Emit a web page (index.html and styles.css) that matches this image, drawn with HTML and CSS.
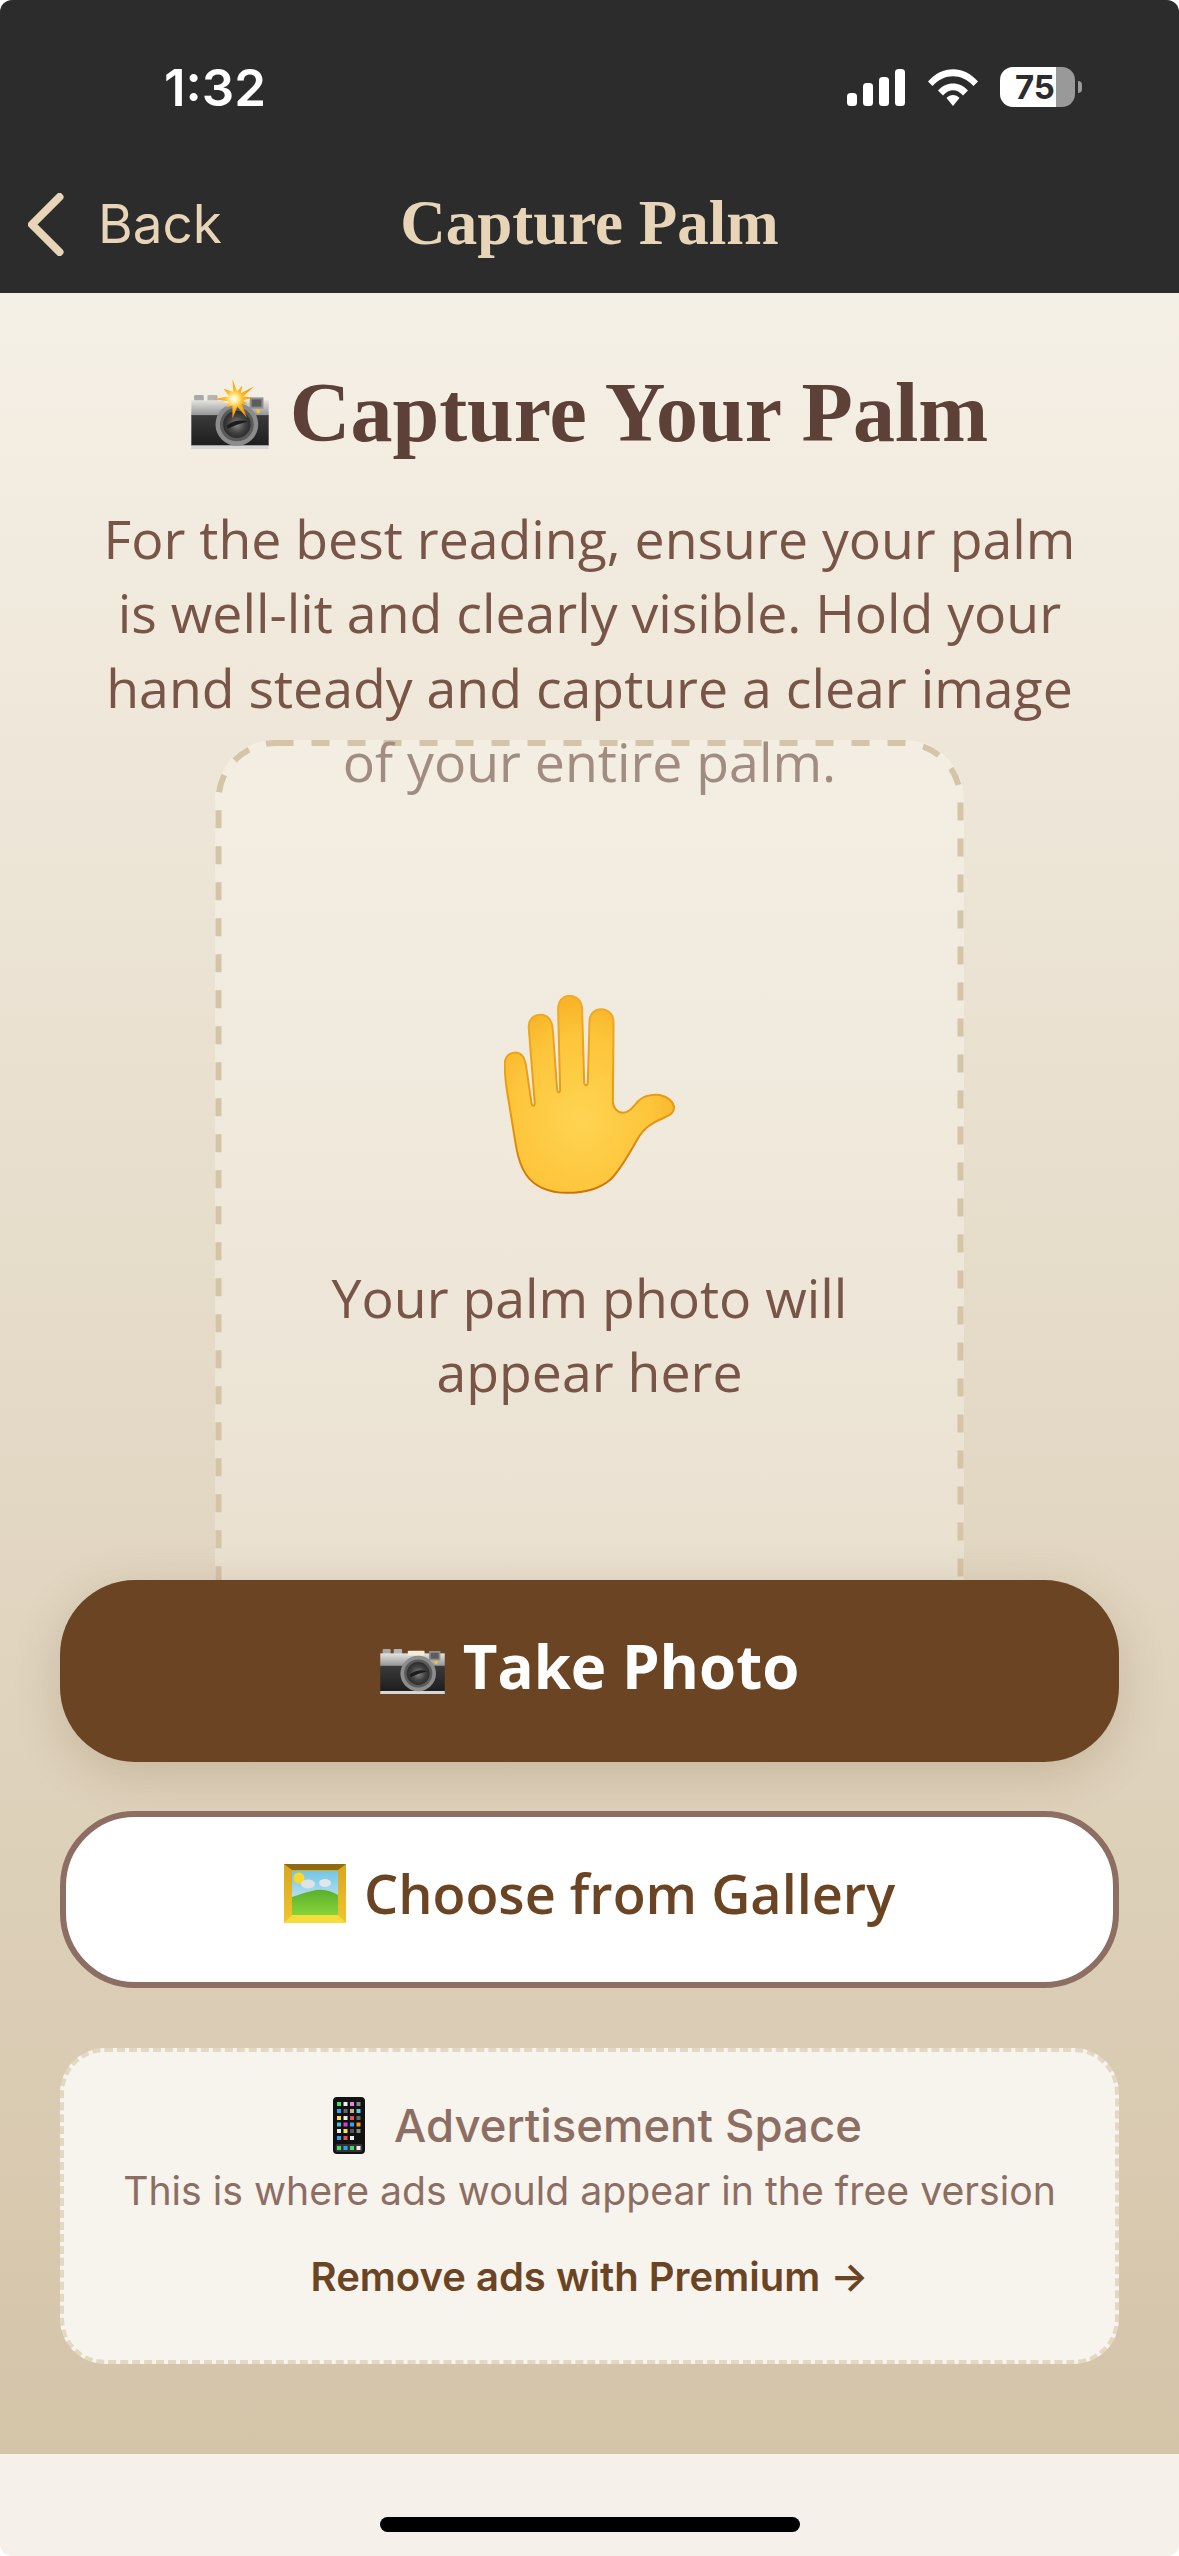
FILE: index.html
```html
<!DOCTYPE html>
<html lang="en">
<head>
<meta charset="utf-8">
<title>Capture Palm</title>
<link rel="stylesheet" href="styles.css">
</head>
<body>
<svg class="sprite" width="0" height="0" aria-hidden="true">
  <defs>
    <linearGradient id="gTop" x1="0" y1="0" x2="0" y2="1"><stop offset="0" stop-color="#e4e4e2"/><stop offset="1" stop-color="#8f8f8f"/></linearGradient>
    <linearGradient id="gBody" x1="0" y1="0" x2="0" y2="1"><stop offset="0" stop-color="#3a3a3a"/><stop offset="1" stop-color="#1d1d1d"/></linearGradient>
    <radialGradient id="gLens" cx="0.5" cy="0.5" r="0.5"><stop offset="0" stop-color="#8a8a8a"/><stop offset="0.6" stop-color="#444"/><stop offset="1" stop-color="#2c2c2c"/></radialGradient>
    <radialGradient id="gStar" cx="0.5" cy="0.5" r="0.55"><stop offset="0" stop-color="#ffffff"/><stop offset="0.16" stop-color="#fff2a8"/><stop offset="0.42" stop-color="#ffb71c"/><stop offset="1" stop-color="#f98a00"/></radialGradient>
    <radialGradient id="gHand" cx="0.45" cy="0.62" r="0.6"><stop offset="0" stop-color="#ffd452"/><stop offset="0.7" stop-color="#fdc53a"/><stop offset="1" stop-color="#f8b428"/></radialGradient>
    <linearGradient id="gRim" x1="0" y1="0" x2="0" y2="1"><stop offset="0" stop-color="#eeac28"/><stop offset="0.6" stop-color="#e8980f"/><stop offset="1" stop-color="#cf7205"/></linearGradient>
    <linearGradient id="gSky" x1="0" y1="0" x2="0" y2="1"><stop offset="0" stop-color="#6fc7e8"/><stop offset="1" stop-color="#e6eef2"/></linearGradient>
    <linearGradient id="gGrass" x1="0" y1="0" x2="0" y2="1"><stop offset="0" stop-color="#5bb02c"/><stop offset="1" stop-color="#86d43a"/></linearGradient>
    <linearGradient id="gFrame" x1="0" y1="0" x2="0" y2="1"><stop offset="0" stop-color="#d9a520"/><stop offset="1" stop-color="#f0c52c"/></linearGradient>
    <symbol id="camera" viewBox="0 0 192 134">
      <rect x="7" y="0" width="24" height="22" rx="3" fill="#a9a9a9"/>
      <rect x="40" y="0" width="25" height="22" rx="3" fill="#b5b5b5"/>
      <rect x="0" y="13" width="192" height="40" fill="url(#gTop)"/>
      <rect x="82" y="5" width="50" height="14" rx="3" fill="#f4ecd6"/>
      <rect x="145" y="6" width="34" height="28" fill="#8f8f8f"/>
      <rect x="150" y="11" width="24" height="18" fill="#5d5d5d"/>
      <rect x="0" y="50" width="192" height="76" fill="url(#gBody)"/>
      <rect x="0" y="125" width="192" height="9" fill="#d6d6d6"/>
      <circle cx="166" cy="40" r="5" fill="#fbc02d"/>
      <circle cx="113" cy="73" r="53" fill="#8c8c8c"/>
      <circle cx="113" cy="73" r="42" fill="#5a5a5a"/>
      <circle cx="113" cy="73" r="34" fill="url(#gLens)"/>
      <path d="M88 76 Q112 58 140 66 Q116 72 90 84 Z" fill="#1c1c1c"/>
    </symbol>
  </defs>
</svg>

<div class="app">
  <header class="top">
    <div class="status">
      <span class="time">1:32</span>
      <div class="status-icons">
        <svg class="signal" viewBox="0 0 58 37"><rect x="0" y="24" width="10" height="13" rx="3.5"/><rect x="16" y="14" width="10" height="23" rx="3.5"/><rect x="32" y="8" width="10" height="29" rx="3.5"/><rect x="48" y="0" width="10" height="37" rx="3.5"/></svg>
        <svg class="wifi" viewBox="0 0 50 37"><path d="M0 12.5 C14 -4 36 -4 50 12.5 L45.5 17 C33.5 4 16.500 4 4.500 17 Z"/><path d="M10 21.500 C18 12 32 12 40 21.500 L35 26.500 C29 19.500 21 19.500 15 26.500 Z"/><path d="M18.500 29 C22 25 28 25 31.500 29 L25 37 Z"/></svg>
        <div class="battery"><div class="cell"><span class="level">75</span></div><span class="nub"></span></div>
      </div>
    </div>
    <nav class="navbar">
      <a class="back">
        <svg class="chevron" viewBox="0 0 36 63"><path d="M31.500 4 L4 31.500 L31.500 59"/></svg>
        <span>Back</span>
      </a>
      <span class="nav-title">Capture Palm</span>
    </nav>
  </header>

  <main class="content">
    <h1 class="headline">
      <svg class="emoji-flash" viewBox="0 0 78 70">
        <use href="#camera" x="0" y="16" width="78" height="54"/>
        <polygon fill="url(#gStar)" points="41.500,0.300 46,12.600 51.300,6.400 49.800,14.300 63,7.400 52,17.400 62,18.500 52.400,21.300 56.800,25.500 50.600,25 56,39 46.300,27.400 41.500,39.700 41.300,26.500 35,28.400 38,22.600 23,20 38,17.400 32.700,9.700 42.400,13"/>
      </svg>
      <span>Capture Your Palm</span>
    </h1>
    <p class="intro">For the best reading, ensure your palm is well-lit and clearly visible. Hold your hand steady and capture a clear image <span class="intro-faded">of your entire palm.</span></p>

    <section class="preview">
      <svg class="preview-border" viewBox="0 0 748 920"><rect x="3" y="3" width="742" height="914" rx="57"/></svg>
      <svg class="hand" viewBox="196 103 512 595">
        <path fill="url(#gHand)" stroke="url(#gRim)" stroke-width="6" d="M198 310 C198 285 215 275 230 275 C248 275 258 290 262 315 L278 425 C280 437 288 437 288 425 L270 200 C270 175 285 162 305 162 C328 162 340 180 342 205 L355 385 C357 398 364 398 364 385 L358 145 C358 120 372 105 393 105 C415 105 430 122 430 148 L436 365 C437 375 446 375 447 365 L452 180 C453 158 468 145 487 145 C508 145 524 160 524 185 L522 420 C522 440 535 455 552 455 C570 455 580 440 598 420 C615 405 640 400 662 402 C690 408 705 425 705 440 C705 455 695 462 675 470 C640 485 615 500 595 535 C570 580 545 625 515 655 C480 685 430 695 385 695 C330 695 285 675 262 640 C245 615 238 590 232 555 L205 390 C200 355 198 330 198 310 Z"/>
      </svg>
      <p class="preview-text">Your palm photo will appear here</p>
    </section>

    <div class="actions">
      <button class="btn btn-primary">
        <svg class="emoji-camera"><use href="#camera"/></svg>
        <span>Take Photo</span>
      </button>
      <button class="btn btn-secondary">
        <svg class="emoji-picture" viewBox="0 0 62 59">
          <rect width="62" height="59" fill="url(#gFrame)"/>
          <path d="M0 0 H62 L54 6 H8 Z" fill="#8f6a12"/>
          <path d="M0 59 H62 L54 51 H8 Z" fill="#f7dc3e"/>
          <rect x="8" y="7" width="46" height="44" fill="url(#gSky)"/>
          <circle cx="15" cy="14" r="5.500" fill="#fdd72e"/>
          <ellipse cx="24" cy="20" rx="7" ry="4.500" fill="#dfe3e6"/>
          <ellipse cx="41" cy="19" rx="6" ry="4" fill="#e3e6e8"/>
          <path d="M8 33 Q22 28 32 26 Q44 25 54 31 V51 H8 Z" fill="url(#gGrass)"/>
        </svg>
        <span>Choose from Gallery</span>
      </button>
    </div>

    <aside class="ad">
      <div class="ad-title">
        <svg class="emoji-phone" viewBox="0 0 32 57">
          <rect width="32" height="57" rx="4" fill="#111"/>
          <g class="apps">
            <rect x="4" y="5" width="4" height="4" fill="#4cd964"/><rect x="10.500" y="5" width="4" height="4" fill="#eee"/><rect x="17" y="5" width="4" height="4" fill="#d58be0"/><rect x="23.500" y="5" width="4" height="4" fill="#888"/>
            <rect x="4" y="12" width="4" height="4" fill="#2aa4f4"/><rect x="10.500" y="12" width="4" height="4" fill="#666"/><rect x="17" y="12" width="4" height="4" fill="#c8b48c"/><rect x="23.500" y="12" width="4" height="4" fill="#4cd3e8"/>
            <rect x="4" y="19" width="4" height="4" fill="#fde14a"/><rect x="10.500" y="19" width="4" height="4" fill="#eee"/><rect x="17" y="19" width="4" height="4" fill="#e5534b"/><rect x="23.500" y="19" width="4" height="4" fill="#666"/>
            <rect x="4" y="25.500" width="4" height="4" fill="#3bc6d6"/><rect x="10.500" y="25.500" width="4" height="4" fill="#d63fd0"/><rect x="17" y="25.500" width="4" height="4" fill="#2aa4f4"/><rect x="23.500" y="25.500" width="4" height="4" fill="#f39c12"/>
            <rect x="4" y="32" width="4" height="4" fill="#eee"/><rect x="10.500" y="32" width="4" height="4" fill="#fde14a"/><rect x="17" y="32" width="4" height="4" fill="#555"/><rect x="23.500" y="32" width="4" height="4" fill="#888"/>
            <rect x="4" y="39" width="4" height="4" fill="#2aa4f4"/><rect x="10.500" y="39" width="4" height="4" fill="#e5534b"/><rect x="17" y="39" width="4" height="4" fill="#eee"/>
            <rect x="2.500" y="47" width="27" height="8" rx="2" fill="#333"/>
            <rect x="4" y="49" width="4" height="4" fill="#4cd964"/><rect x="10.500" y="49" width="4" height="4" fill="#2aa4f4"/><rect x="17" y="49" width="4" height="4" fill="#4cd964"/><rect x="23.500" y="49" width="4" height="4" fill="#eee"/>
          </g>
        </svg>
        <span>Advertisement Space</span>
      </div>
      <p class="ad-text">This is where ads would appear in the free version</p>
      <a class="ad-link">Remove ads with Premium →</a>
    </aside>
  </main>

  <footer class="home">
    <span class="home-bar"></span>
  </footer>
</div>
</body>
</html>
```
FILE: styles.css
```css
* { box-sizing: border-box; }

html, body {
  margin: 0;
  padding: 0;
  background: #fff;
}

.sprite {
  position: absolute;
}

.app {
  width: 1179px;
  height: 2556px;
  display: flex;
  flex-direction: column;
  border-radius: 12px;
  overflow: hidden;
  font-family: "Open Sans", sans-serif;
}

.top {
  height: 293px;
  background: #2c2c2c;
  display: flex;
  flex-direction: column;
}

.status {
  height: 172px;
  padding: 59px 97px 0 164px;
  display: flex;
  justify-content: space-between;
  align-items: flex-start;
}

.time {
  font-family: Inter, sans-serif;
  font-weight: 600;
  font-size: 51px;
  line-height: 58px;
  color: #fff;
}

.status-icons {
  display: flex;
  align-items: center;
  padding-top: 8px;
  gap: 23px;
}

.signal { width: 58px; height: 37px; fill: #fff; }
.wifi { width: 50px; height: 37px; fill: #fff; margin-right: -1px; }

.battery {
  display: flex;
  align-items: center;
  gap: 3px;
}

.cell {
  width: 75px;
  height: 40px;
  border-radius: 13px;
  background: linear-gradient(90deg, #fff 0, #fff 56px, #999 56px);
  display: flex;
  align-items: center;
  padding-left: 15px;
}

.level {
  font-family: Inter, sans-serif;
  font-weight: 700;
  font-size: 33px;
  line-height: 40px;
  color: #2c2c2c;
}

.nub {
  width: 4px;
  height: 12px;
  background: #999;
  border-radius: 0 4px 4px 0;
}

.navbar {
  height: 121px;
  position: relative;
  display: flex;
  align-items: flex-start;
  padding-left: 28px;
}

.back {
  display: flex;
  align-items: center;
  gap: 34px;
  font-family: Inter, sans-serif;
  font-size: 53px;
  line-height: 63px;
  color: #e8d5b7;
  margin-top: 21px;
}

.chevron {
  width: 36px;
  height: 63px;
  fill: none;
  stroke: #e8d5b7;
  stroke-width: 8;
  stroke-linecap: round;
  stroke-linejoin: round;
}

.nav-title {
  position: absolute;
  left: 0;
  right: 0;
  top: 15px;
  text-align: center;
  font-family: "Liberation Serif", serif;
  font-weight: 700;
  font-size: 63px;
  line-height: 72px;
  color: #e8d5b7;
}

.content {
  flex: 1;
  min-height: 0;
  background: linear-gradient(180deg, #f5f0e6 0%, #d4c4a8 100%);
  display: flex;
  flex-direction: column;
  align-items: center;
  padding: 70px 60px 0;
}

.headline {
  margin: 0;
  display: flex;
  align-items: flex-end;
  gap: 21px;
  font-family: "Liberation Serif", serif;
  font-weight: 700;
  font-size: 84px;
  line-height: 100px;
  color: #5d4037;
}

.emoji-flash {
  width: 78px;
  height: 70px;
  margin-bottom: 14px;
}

.intro {
  margin: 39px 0 0;
  width: 1000px;
  text-align: center;
  font-size: 53.600px;
  line-height: 74.400px;
  color: #795548;
  position: relative;
  z-index: 1;
}

.intro-faded {
  color: #a08c80;
}

.preview {
  width: 749px;
  height: 920px;
  margin-top: -60px;
  flex: none;
  border-radius: 60px;
  background: linear-gradient(180deg, rgba(245, 240, 230, 0.75), rgba(245, 240, 230, 0.35));
  display: flex;
  flex-direction: column;
  align-items: center;
  padding-top: 255px;
  position: relative;
}

.preview-border {
  position: absolute;
  inset: 0;
  width: 100%;
  height: 100%;
  fill: none;
  stroke: #d4c4a8;
  stroke-width: 6;
  stroke-dasharray: 18 18;
}

.hand {
  width: 171px;
  height: 199px;
}

.preview-text {
  margin: 67px 0 0;
  width: 560px;
  text-align: center;
  font-size: 53.600px;
  line-height: 74.400px;
  color: #795548;
}

.actions {
  width: 1059px;
  flex: none;
  margin-top: -80px;
  display: flex;
  flex-direction: column;
  gap: 49px;
  position: relative;
  z-index: 2;
}

.btn {
  width: 100%;
  border-radius: 75px;
  display: flex;
  align-items: center;
  justify-content: center;
  font-family: "Open Sans", sans-serif;
}

.btn-primary {
  height: 182px;
  border: 0;
  gap: 18px;
  padding: 0 0 10px;
  background: #6b4423;
  color: #fff;
  font-weight: 700;
  font-size: 60px;
  box-shadow: 0 12px 48px rgba(107, 68, 35, 0.2);
}

.btn-secondary {
  height: 177px;
  border: 6px solid #8d6e63;
  gap: 18px;
  padding: 0 0 12px;
  background: #fff;
  color: #6b4423;
  font-weight: 600;
  font-size: 54px;
}

.emoji-camera { width: 65px; height: 45px; margin-top: 12px; }
.emoji-picture { width: 62px; height: 59px; }

.ad {
  width: 1059px;
  height: 316px;
  flex: none;
  margin-top: 60px;
  border: 4px dashed #e3d8c2;
  border-radius: 45px;
  background: #f7f4ee;
  display: flex;
  flex-direction: column;
  align-items: center;
  font-family: Inter, sans-serif;
  color: #8d6e63;
}

.ad-title {
  margin-top: 45px;
  padding-left: 16px;
  display: flex;
  align-items: center;
  gap: 29px;
  font-size: 45.500px;
  font-weight: 500;
  line-height: 57px;
}

.emoji-phone { width: 32px; height: 57px; }

.ad-text {
  margin: 12px 0 0;
  font-size: 39.200px;
  line-height: 50px;
}

.ad-link {
  margin-top: 36px;
  font-size: 40px;
  font-weight: 600;
  line-height: 50px;
  color: #6b4423;
}

.home {
  height: 102px;
  background: #f5f1ea;
  display: flex;
  justify-content: center;
  padding-top: 63px;
}

.home-bar {
  width: 420px;
  height: 15px;
  border-radius: 8px;
  background: #000;
}
```
